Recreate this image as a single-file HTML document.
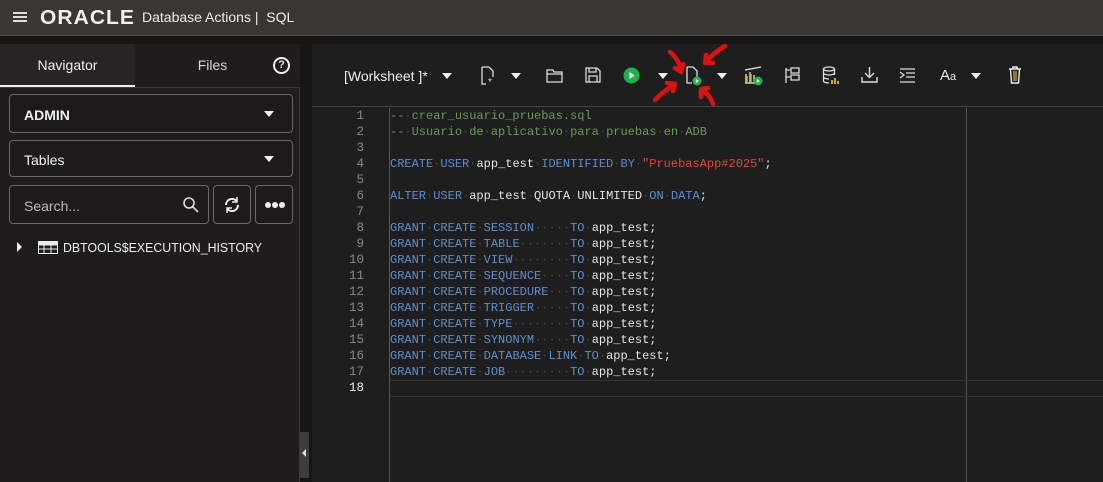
<!DOCTYPE html>
<html><head><meta charset="utf-8"><style>
*{margin:0;padding:0;box-sizing:border-box}
body{width:1103px;height:482px;overflow:hidden;background:#161514;font-family:"Liberation Sans",sans-serif;color:#e8e8e8;position:relative}
.hdr{position:absolute;left:0;top:0;width:1103px;height:36px;background:#3a3632;border-bottom:1px solid #55504a}
.abs{position:absolute}
.left{position:absolute;left:0;top:44px;width:300px;height:438px;background:#1e1d1c}
.tab{position:absolute;top:0;height:43px;line-height:43px;text-align:center;font-size:14px}
.box{position:absolute;border:1px solid #6b6966;border-radius:4px;background:#1c1b1a;font-size:14px;color:#f0f0f0}
.caret{position:absolute;width:0;height:0;border-left:5px solid transparent;border-right:5px solid transparent;border-top:6px solid #eee}
.right{position:absolute;left:312px;top:44px;width:791px;height:438px;background:#1e1e1e}
.tb{position:absolute;left:0;top:0;width:791px;height:63px;border-bottom:1px solid #444}
.code{position:absolute;left:390px;top:108px;font-family:"Liberation Mono",monospace;font-size:12px;line-height:16px;white-space:pre}
.ln{position:absolute;left:312px;top:108px;width:52px;text-align:right;font-family:"Liberation Mono",monospace;font-size:12.5px;line-height:16px;color:#8a8a8a;white-space:pre}
.k{color:#5b8fd2}.i{color:#e6e6e6}.c{color:#6a9a55}.s{color:#e8453a}.d{color:#4a4a4a}
</style></head><body>
<div class="hdr">
 <div class="abs" style="left:13px;top:12px;width:14px;height:2px;background:#ddd;box-shadow:0 4px 0 #ddd,0 8px 0 #ddd"></div>
 <div class="abs" style="left:40px;top:7px;font-size:20px;font-weight:bold;letter-spacing:1px;color:#f2f2f2;transform:scaleX(1.05);transform-origin:left">ORACLE</div>
 <div class="abs" style="left:142px;top:9px;font-size:14px;color:#eee">Database Actions |&nbsp; SQL</div>
</div>
<div class="left">
 <div class="tab" style="left:0;width:135px;background:#262524;border-bottom:2px solid #eee;color:#f0f0f0">Navigator</div>
 <div class="tab" style="left:150px;width:125px;color:#d8d8d8">Files</div>
 <div class="abs" style="left:273px;top:13px;width:17px;height:17px;border:2px solid #eee;border-radius:50%;font-size:11px;font-weight:bold;text-align:center;line-height:13px">?</div>
 <div class="abs" style="left:0;top:43px;width:300px;height:395px;border-top:1px solid #3a3a3a;border-right:1px solid #3a3a3a"></div>
 <div class="box" style="left:9px;top:50px;width:284px;height:39px;padding:12px 14px;font-weight:bold">ADMIN<div class="caret" style="right:18px;top:16px"></div></div>
 <div class="box" style="left:9px;top:96px;width:284px;height:37px;padding:11px 14px">Tables<div class="caret" style="right:18px;top:15px"></div></div>
 <div class="box" style="left:9px;top:141px;width:200px;height:39px;padding:12px 14px;color:#bbb">Search...
  <svg class="abs" style="right:8px;top:10px" width="18" height="18" viewBox="0 0 18 18"><circle cx="7" cy="7" r="5" fill="none" stroke="#ddd" stroke-width="1.6"/><path d="M11 11L16 16" stroke="#ddd" stroke-width="1.6"/></svg></div>
 <div class="box" style="left:213px;top:141px;width:38px;height:39px">
  <svg class="abs" style="left:9px;top:10px" width="18" height="18" viewBox="0 0 18 18"><path d="M3 9a6 6 0 0 1 10.5-4M15 9a6 6 0 0 1-10.5 4" fill="none" stroke="#eee" stroke-width="2"/><path d="M14 1v5h-5M4 17v-5h5" fill="none" stroke="#eee" stroke-width="1.5"/></svg></div>
 <div class="box" style="left:255px;top:141px;width:38px;height:39px">
  <svg class="abs" style="left:8px;top:15px" width="22" height="8" viewBox="0 0 22 8"><circle cx="4" cy="4" r="3" fill="#eee"/><circle cx="11" cy="4" r="3" fill="#eee"/><circle cx="18" cy="4" r="3" fill="#eee"/></svg></div>
 <div class="abs" style="left:17px;top:198px;width:0;height:0;border-top:5px solid transparent;border-bottom:5px solid transparent;border-left:5px solid #eee"></div>
 <svg class="abs" style="left:38px;top:197px" width="20" height="13" viewBox="0 0 20 13"><rect x="0.5" y="0.5" width="19" height="12" fill="none" stroke="#eee"/><path d="M0 4H20M0 8H20M6 0V13M13 0V13" stroke="#eee"/><rect x="0" y="0" width="20" height="4" fill="#eee"/></svg>
 <div class="abs" style="left:63px;top:196px;font-size:13px;color:#eee;transform:scaleX(0.95);transform-origin:left;white-space:nowrap">DBTOOLS$EXECUTION_HISTORY</div>
</div>
<div class="abs" style="left:300px;top:432px;width:9px;height:46px;background:#3c3c3c"></div>
<div class="abs" style="left:302px;top:449px;width:0;height:0;border-top:4px solid transparent;border-bottom:4px solid transparent;border-right:4px solid #ddd"></div>
<div class="right">
 <div class="tb">
  <div class="abs" style="left:32px;top:24px;font-size:14px;color:#eee">[Worksheet ]*</div>
  <div class="caret" style="left:130px;top:29px"></div>
  <svg class="abs" style="left:168px;top:22px" width="16" height="20" viewBox="0 0 16 20"><path d="M2 1h7l4 4v6M2 1v17h4" fill="none" stroke="#ddd" stroke-width="1.3"/><text x="8" y="19" font-size="10" fill="#ddd" font-family="Liberation Sans">*</text></svg>
  <div class="caret" style="left:199px;top:29px"></div>
  <svg class="abs" style="left:234px;top:24px" width="18" height="15" viewBox="0 0 18 15"><path d="M1 2h6l1 2h8v10H1zM1 6h15" fill="none" stroke="#ddd" stroke-width="1.3"/></svg>
  <svg class="abs" style="left:273px;top:23px" width="16" height="16" viewBox="0 0 16 16"><path d="M1 1h11l3 3v11H1zM4 1v4h7V1M4 15V9h8v6" fill="none" stroke="#ddd" stroke-width="1.3"/></svg>
  <svg class="abs" style="left:311px;top:23px" width="17" height="17" viewBox="0 0 17 17"><circle cx="8.5" cy="8.5" r="8" fill="#1fb24a"/><path d="M6.5 5l5 3.5-5 3.5z" fill="#fff"/></svg>
  <div class="caret" style="left:346px;top:29px"></div>
  <svg class="abs" style="left:373px;top:22px" width="18" height="20" viewBox="0 0 18 20"><path d="M2 1h6l4 4v6M2 1v16h5" fill="none" stroke="#ddd" stroke-width="1.3"/><circle cx="12" cy="15" r="4.5" fill="#1fb24a"/><path d="M10.8 13l3 2-3 2z" fill="#fff"/></svg>
  <div class="caret" style="left:405px;top:29px"></div>
  <svg class="abs" style="left:432px;top:22px" width="20" height="20" viewBox="0 0 20 20"><path d="M1 4l16-3M2 17V8M6 17V6M10 17V9M1 17h12" stroke="#ccc" stroke-width="1.5" fill="none"/><path d="M3 17V10M7 17V8" stroke="#c9a93a" stroke-width="1.5"/><circle cx="14" cy="15" r="4.5" fill="#1fb24a"/><path d="M12.8 13l3 2-3 2z" fill="#fff"/></svg>
  <svg class="abs" style="left:472px;top:23px" width="16" height="17" viewBox="0 0 16 17"><path d="M2 1v15M2 3h4M2 10h4M7 1h8v5H7zM7 8h8v5H7z" fill="none" stroke="#ddd" stroke-width="1.3"/></svg>
  <svg class="abs" style="left:510px;top:22px" width="18" height="19" viewBox="0 0 18 19"><ellipse cx="7" cy="3" rx="5.5" ry="2" fill="none" stroke="#ddd" stroke-width="1.3"/><path d="M1.5 3v12c0 1 2 2 5.5 2M12.5 3v6M1.5 7c0 1 2.5 2 5.5 2s5.5-1 5.5-2M1.5 11c0 1 2.5 2 5.5 2" fill="none" stroke="#ddd" stroke-width="1.3"/><path d="M10 18v-4M13 18v-6M16 18v-3" stroke="#c9a93a" stroke-width="2"/></svg>
  <svg class="abs" style="left:549px;top:22px" width="17" height="17" viewBox="0 0 17 17"><path d="M8.5 1v10M4 7l4.5 4.5L13 7M1 11v5h15v-5" fill="none" stroke="#ddd" stroke-width="1.4"/></svg>
  <svg class="abs" style="left:587px;top:24px" width="17" height="15" viewBox="0 0 17 15"><path d="M1 1h15M7 5h9M7 9h9M1 14h15M1 4l4 3-4 3" fill="none" stroke="#ddd" stroke-width="1.3"/></svg>
  <div class="abs" style="left:628px;top:23px;font-size:15px;color:#eee">A<span style="font-size:11px">a</span></div>
  <div class="caret" style="left:659px;top:29px"></div>
  <svg class="abs" style="left:696px;top:22px" width="14" height="18" viewBox="0 0 14 18"><path d="M1 3h12M5 3V1h4v2M2.5 3l1 14h7l1-14" fill="none" stroke="#eee" stroke-width="1.4"/><path d="M6 5v10M8 5v10" stroke="#c9a93a" stroke-width="1.3"/></svg>
 </div>
 <div class="abs" style="left:77px;top:64px;width:1px;height:374px;background:#555"></div>
 <div class="abs" style="left:654px;top:64px;width:1px;height:374px;background:#555"></div>
 <div class="abs" style="left:78px;top:336px;width:713px;height:17px;border-top:1px solid #333;border-bottom:1px solid #333"></div>
</div>
<div class="ln">1
2
3
4
5
6
7
8
9
10
11
12
13
14
15
16
17
<span style="color:#eee">18</span></div>
<div class="code"><span class="c">--<span class="d">·</span>crear_usuario_pruebas.sql</span>
<span class="c">--<span class="d">·</span>Usuario<span class="d">·</span>de<span class="d">·</span>aplicativo<span class="d">·</span>para<span class="d">·</span>pruebas<span class="d">·</span>en<span class="d">·</span>ADB</span>

<span class="k">CREATE</span><span class="d">·</span><span class="k">USER</span><span class="d">·</span><span class="i">app_test</span><span class="d">·</span><span class="k">IDENTIFIED</span><span class="d">·</span><span class="k">BY</span><span class="d">·</span><span class="s">"PruebasApp#2025"</span><span class="i">;</span>

<span class="k">ALTER</span><span class="d">·</span><span class="k">USER</span><span class="d">·</span><span class="i">app_test</span><span class="d">·</span><span class="i">QUOTA</span><span class="d">·</span><span class="i">UNLIMITED</span><span class="d">·</span><span class="k">ON</span><span class="d">·</span><span class="k">DATA</span><span class="i">;</span>

<span class="k">GRANT</span><span class="d">·</span><span class="k">CREATE</span><span class="d">·</span><span class="k">SESSION</span><span class="d">·····</span><span class="k">TO</span><span class="d">·</span><span class="i">app_test;</span>
<span class="k">GRANT</span><span class="d">·</span><span class="k">CREATE</span><span class="d">·</span><span class="k">TABLE</span><span class="d">·······</span><span class="k">TO</span><span class="d">·</span><span class="i">app_test;</span>
<span class="k">GRANT</span><span class="d">·</span><span class="k">CREATE</span><span class="d">·</span><span class="k">VIEW</span><span class="d">········</span><span class="k">TO</span><span class="d">·</span><span class="i">app_test;</span>
<span class="k">GRANT</span><span class="d">·</span><span class="k">CREATE</span><span class="d">·</span><span class="k">SEQUENCE</span><span class="d">····</span><span class="k">TO</span><span class="d">·</span><span class="i">app_test;</span>
<span class="k">GRANT</span><span class="d">·</span><span class="k">CREATE</span><span class="d">·</span><span class="k">PROCEDURE</span><span class="d">···</span><span class="k">TO</span><span class="d">·</span><span class="i">app_test;</span>
<span class="k">GRANT</span><span class="d">·</span><span class="k">CREATE</span><span class="d">·</span><span class="k">TRIGGER</span><span class="d">·····</span><span class="k">TO</span><span class="d">·</span><span class="i">app_test;</span>
<span class="k">GRANT</span><span class="d">·</span><span class="k">CREATE</span><span class="d">·</span><span class="k">TYPE</span><span class="d">········</span><span class="k">TO</span><span class="d">·</span><span class="i">app_test;</span>
<span class="k">GRANT</span><span class="d">·</span><span class="k">CREATE</span><span class="d">·</span><span class="k">SYNONYM</span><span class="d">·····</span><span class="k">TO</span><span class="d">·</span><span class="i">app_test;</span>
<span class="k">GRANT</span><span class="d">·</span><span class="k">CREATE</span><span class="d">·</span><span class="k">DATABASE</span><span class="d">·</span><span class="k">LINK</span><span class="d">·</span><span class="k">TO</span><span class="d">·</span><span class="i">app_test;</span>
<span class="k">GRANT</span><span class="d">·</span><span class="k">CREATE</span><span class="d">·</span><span class="k">JOB</span><span class="d">·········</span><span class="k">TO</span><span class="d">·</span><span class="i">app_test;</span>
</div>
<svg class="abs" style="left:645px;top:42px" width="90" height="68" viewBox="0 0 90 68"><g stroke="#e01010" stroke-width="4.5" stroke-linecap="round" stroke-linejoin="round" fill="none">
<path d="M25 10C30 14 34 20 36 28"/><path d="M30 26L36 30L38 22"/>
<path d="M80 4C73 8 66 14 61 20"/><path d="M61 13L60 21L68 21"/>
<path d="M10 58C16 52 23 46 30 42"/><path d="M22 41L30 42L28 49"/>
<path d="M68 62C66 56 62 51 57 48"/><path d="M56 55L56 47L63 46"/>
</g></svg>
</body></html>
